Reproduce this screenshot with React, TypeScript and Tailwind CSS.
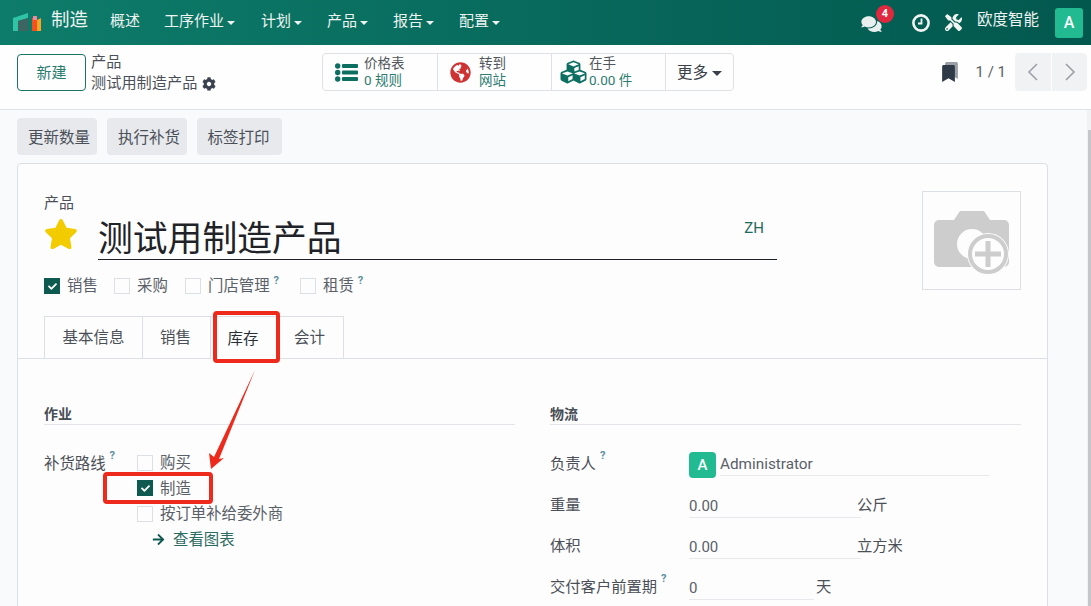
import React from "react";
import { FaCog, FaStar, FaComments, FaTools, FaBookmark, FaGlobeAmericas, FaCubes, FaArrowRight, FaCheck } from "react-icons/fa";

const font = { fontFamily: 'Roboto, "Noto Sans CJK SC", sans-serif' };

function Caret() {
  return <span className="w-0 h-0 ml-[3px] mt-[2px] border-x-[4.5px] border-t-[4.5px] border-x-transparent border-t-current" />;
}

function Check({ on = false }: { on?: boolean }) {
  return on ? (
    <span className="w-[16px] h-[16px] bg-[#0f5a50] flex items-center justify-center shrink-0">
      <FaCheck className="w-[9px] h-[9px] text-white" />
    </span>
  ) : (
    <span className="w-[16px] h-[16px] border border-[#dcdfe3] bg-[#fdfdfd] shrink-0" />
  );
}

function Help() {
  return <span className="text-[11px] leading-[12px] font-bold text-[#5a8fa0] ml-[4px]">?</span>;
}

function Opt({ label, on, help, w }: { label: string; on?: boolean; help?: boolean; w: string }) {
  return (
    <div className={"flex items-center gap-[7px] " + w}>
      <Check on={on} />
      <span className="pt-[2px] text-[15.4px] text-[#5a6068] flex items-start">{label}{help && <Help />}</span>
    </div>
  );
}

function Stat({ icon, top, bottom, w, pad = "pl-[12px]", col = "w-[29px]" }: { icon: React.ReactNode; top: string; bottom: string; w: string; pad?: string; col?: string }) {
  return (
    <div className={"flex items-center h-full border-r border-[#dee2e6] " + pad + " " + w}>
      <div className={"flex justify-start shrink-0 " + col}>{icon}</div>
      <div className="text-[13.5px] leading-[17px]">
        <div className="text-[#51565c]">{top}</div>
        <div className="text-[#2d7c70]">{bottom}</div>
      </div>
    </div>
  );
}

function Field({ label, help, value, unit, lineW }: { label: string; help?: boolean; value: string; unit: string; lineW: string }) {
  return (
    <div className="flex h-[41px] items-start">
      <div className="w-[139px] text-[15.3px] text-[#4b5058] flex items-start leading-[29px] shrink-0">{label}{help && <Help />}</div>
      <div className={"border-b border-[#e7e9ec] h-[27px] text-[15px] text-[#5a6068] leading-[30px] " + lineW}>{value}</div>
      <div className="text-[15.3px] text-[#4b5058] leading-[28px] ml-[-4px]">{unit}</div>
    </div>
  );
}

function Chevron({ left }: { left?: boolean }) {
  return (
    <svg width="12" height="20" viewBox="0 0 12 20" fill="none" stroke="#9aa0a6" strokeWidth="1.6">
      <polyline points={left ? "10,2 2,10 10,18" : "2,2 10,10 2,18"} />
    </svg>
  );
}

export default function App() {
  return (
    <div className="relative w-[1091px] h-[606px] overflow-hidden bg-[#f9fafb]" style={font}>
      {/* Navbar */}
      <div className="h-[45px] flex items-center pl-[13px] pr-[8px] bg-gradient-to-r from-[#0e7c6a] to-[#03584e] text-[#edf3f1]">
        <svg width="29" height="20" viewBox="0 0 29 20" className="shrink-0">
          <polygon points="0,5 15,0 15,5 5,8 5,18 0,18" fill="#2fc4a6" />
          <polygon points="5,8 15,5 15,18 5,18" fill="#3d6663" />
          <polygon points="19,5 24,5 24,18 19,18" fill="#f4511e" />
          <polygon points="24,7 28,5 28,18 24,18" fill="#f5a623" />
          <rect x="20" y="3" width="4" height="4" fill="#e88aa0" />
        </svg>
        <span className="text-[18.5px] ml-[9px] w-[59px] shrink-0 pb-[4px]">制造</span>
        <div className="flex items-center gap-[25px] text-[15px] pb-[2px]">
          <span className="mr-[-1px]">概述</span>
          <span className="flex items-center mr-[1px]">工序作业<Caret /></span>
          {["计划", "产品", "报告", "配置"].map((t) => (
            <span key={t} className="flex items-center">{t}<Caret /></span>
          ))}
        </div>
        <div className="ml-auto flex items-center">
          <div className="relative mr-[30px]">
            <FaComments className="w-[21px] h-[18px] text-[#e9efee] mt-[3px]" />
            <span className="absolute left-[15px] top-[-7px] w-[18px] h-[18px] rounded-full bg-[#e0293f] text-white text-[11px] font-bold flex items-center justify-center">4</span>
          </div>
          <svg width="18" height="18" viewBox="0 0 18 18" fill="none" stroke="#f2f5f4" className="mr-[15px]">
            <circle cx="9" cy="9" r="7.6" strokeWidth="2.6" />
            <path d="M9.5 4.5 V9.5 H6" strokeWidth="1.8" />
          </svg>
          <FaTools className="w-[17px] h-[17px] mr-[15px] text-[#f2f5f4]" />
          <span className="text-[15.5px] mr-[16px] pb-[4px]">欧度智能</span>
          <span className="w-[28px] h-[30px] rounded-[3px] bg-[#22bb91] text-white text-[16px] font-medium flex items-center justify-center">A</span>
        </div>
      </div>

      {/* Control panel */}
      <div className="h-[65px] bg-[#fefefe] border-b border-[#dee2e6] flex items-start pt-[8px] pl-[17px] pr-[4px]">
        <div className="w-[305px] flex items-start shrink-0">
          <button className="w-[69px] h-[37px] mt-[1px] pt-[2px] border border-[#1a7367] rounded-[4px] text-[15px] text-[#2a7c6f]">新建</button>
          <div className="ml-[5px] text-[15.2px] leading-[21px] text-[#4b5058] mt-[-1px]">
            <div>产品</div>
            <div className="flex items-center gap-[5px]">测试用制造产品 <FaCog className="w-[14px] h-[14px] text-[#3c4350]" /></div>
          </div>
        </div>
        <div className="w-[412px] h-[38px] border border-[#dee2e6] rounded-[4px] flex items-center shrink-0">
          <Stat
            w="w-[115px]"
            icon={
              <svg width="23" height="19" viewBox="0 0 23 19" fill="#0d6f61">
                <circle cx="2.7" cy="3" r="2.7" />
                <circle cx="2.7" cy="9.5" r="2.7" />
                <circle cx="2.7" cy="16" r="2.7" />
                <rect x="7" y="1" width="16" height="4" rx="1" />
                <rect x="7" y="7.5" width="16" height="4" rx="1" />
                <rect x="7" y="14" width="16" height="4" rx="1" />
              </svg>
            }
            top="价格表"
            bottom="0 规则"
          />
          <Stat w="w-[114px]" icon={<FaGlobeAmericas className="w-[21px] h-[21px] text-[#cf3232]" />} top="转到" bottom="网站" />
          <Stat w="w-[114px]" pad="pl-[7px]" col="w-[30px]" icon={<FaCubes className="w-[29px] h-[26px] text-[#0d6f61]" />} top="在手" bottom="0.00 件" />
          <div className="flex items-center pl-[11px] text-[15.5px] text-[#3b4048]"><span className="pt-[3px]">更多</span><span className="w-0 h-0 ml-[4px] mt-[2px] border-x-[5px] border-t-[5px] border-x-transparent border-t-[#3b4048]" /></div>
        </div>
        <div className="ml-auto flex items-center h-[38px]">
          <div className="relative w-[16px] h-[20px] mr-[18px]">
            <FaBookmark className="absolute left-[3px] top-0 w-[13px] h-[17px] text-[#9a9ea5]" />
            <FaBookmark className="absolute left-0 top-[3px] w-[13px] h-[17px] text-[#2f3a48]" />
          </div>
          <span className="text-[15px] text-[#5a6068] mr-[9px] pt-[1px]">1 / 1</span>
          <div className="w-[36px] h-[38px] bg-[#f1f2f3] rounded-l-[4px] flex items-center justify-center mr-[1px]"><Chevron left /></div>
          <div className="w-[35px] h-[38px] bg-[#f1f2f3] rounded-r-[4px] flex items-center justify-center"><Chevron /></div>
        </div>
      </div>

      {/* Content */}
      <div className="px-[17px] pt-[8px]">
        <div className="flex gap-[10px]">
          <button className="w-[80px] h-[37px] pt-[5px] pl-[4px] rounded-[4px] bg-[#e7e9ed] text-[15.5px] text-[#4b5058]">更新数量</button>
          <button className="w-[80px] h-[37px] pt-[5px] pl-[4px] rounded-[4px] bg-[#e7e9ed] text-[15.5px] text-[#4b5058]">执行补货</button>
          <button className="w-[85px] h-[37px] pt-[5px] pr-[2px] rounded-[4px] bg-[#e7e9ed] text-[15.5px] text-[#4b5058]">标签打印</button>
        </div>

        <div className="mt-[8px] w-[1031px] h-[500px] bg-[#fdfdfd] border border-[#dcdfe3] rounded-t-[4px]">
          <div className="px-[26px] pt-[27px] flex justify-between">
            <div className="w-[733px]">
              <div className="text-[15px] leading-[24px] h-[24px] text-[#4b5058]">产品</div>
              <div className="flex items-start mt-[1px]">
                <FaStar className="w-[34px] h-[32px] text-[#f3cc00] mt-[2px] shrink-0" />
                <div className="ml-[20px] w-[679px] h-[44px] border-b border-[#1f2328] flex justify-between items-start">
                  <span className="text-[34.8px] leading-[47px] text-[#1f2328]">测试用制造产品</span>
                  <span className="text-[15px] text-[#1f6a60] mr-[13px] mt-[1px]">ZH</span>
                </div>
              </div>
              <div className="flex items-center mt-[16px] h-[20px]">
                <Opt w="w-[70px]" label="销售" on />
                <Opt w="w-[71px]" label="采购" />
                <Opt w="w-[115px]" label="门店管理" help />
                <Opt w="w-[80px]" label="租赁" help />
              </div>
            </div>
            <div className="w-[99px] h-[99px] border border-[#dcdfe3] flex items-center justify-center">
              <svg width="76" height="70" viewBox="0 0 76 70">
                <path d="M5 14 H20 L26 5 H50 L56 14 H70 A5 5 0 0 1 75 19 V56 A5 5 0 0 1 70 61 H5 A5 5 0 0 1 0 56 V19 A5 5 0 0 1 5 14 Z" fill="#cdcdcd" />
                <circle cx="38" cy="38" r="15" fill="#fdfdfd" />
                <circle cx="54" cy="48" r="21" fill="#fdfdfd" />
                <circle cx="54" cy="48" r="18" fill="none" stroke="#cdcdcd" strokeWidth="4" />
                <rect x="41" y="45.5" width="26" height="5" fill="#cdcdcd" />
                <rect x="51.5" y="35" width="5" height="26" fill="#cdcdcd" />
              </svg>
            </div>
          </div>

          {/* Tabs */}
          <div className="mt-[20px] border-b border-[#dcdfe3] h-[43px] pl-[26px] flex text-[15.5px] text-[#4b5058]">
            <div className="w-[99px] h-[43px] pt-[3px] border border-[#dcdfe3] flex items-center justify-center">基本信息</div>
            <div className="w-[68px] h-[43px] pt-[3px] pr-[2px] border-y border-r border-[#dcdfe3] flex items-center justify-center">销售</div>
            <div className="w-[68px] h-[43px] pt-[3px] pr-[3px] border-t border-r border-[#dcdfe3] bg-[#fdfdfd] flex items-center justify-center text-[#2a2f35]">库存</div>
            <div className="w-[65px] h-[43px] pt-[3px] pr-[3px] border-y border-r border-[#dcdfe3] flex items-center justify-center">会计</div>
          </div>

          {/* Sheet */}
          <div className="pl-[26px] pt-[45px] flex gap-[35px]">
            <div className="w-[471px]">
              <div className="h-[21px] border-b border-[#e3e5e8] text-[14px] font-bold text-[#484d55] leading-[20px]">作业</div>
              <div className="flex mt-[25px]">
                <div className="w-[93px] text-[15.4px] text-[#4b5058] flex items-start leading-[29px]">补货路线<Help /></div>
                <div className="flex flex-col text-[15.4px] text-[#5a6068]">
                  <div className="h-[25px] flex items-center gap-[7px]"><Check /><span className="pt-[3px]">购买</span></div>
                  <div className="h-[26px] flex items-center gap-[7px]"><Check on /><span className="pt-[3px]">制造</span></div>
                  <div className="h-[25px] flex items-center gap-[7px]"><Check /><span className="pt-[2px]">按订单补给委外商</span></div>
                  <div className="h-[27px] flex items-center pl-[15px] text-[#2d6b62]"><FaArrowRight className="w-[13px] h-[13px] mr-[8px] text-[#0f5a50]" /><span className="pt-[2px]">查看图表</span></div>
                </div>
              </div>
            </div>
            <div className="w-[471px]">
              <div className="h-[21px] border-b border-[#e3e5e8] text-[14px] font-bold text-[#484d55] leading-[20px]">物流</div>
              <div className="mt-[25px]">
                <div className="flex h-[41px] items-start">
                  <div className="w-[139px] text-[15.3px] text-[#4b5058] flex items-start leading-[29px] shrink-0">负责人<Help /></div>
                  <span className="w-[27px] h-[26px] mt-[2px] rounded-[4px] bg-[#22bb91] text-white text-[15px] font-medium flex items-center justify-center shrink-0">A</span>
                  <div className="ml-[4px] w-[270px] h-[26px] border-b border-[#e7e9ec] text-[15.3px] text-[#5a6068] leading-[29px]">Administrator</div>
                </div>
                <Field label="重量" value="0.00" unit="公斤" lineW="w-[172px]" />
                <Field label="体积" value="0.00" unit="立方米" lineW="w-[172px]" />
                <Field label="交付客户前置期" help value="0" unit="天" lineW="w-[125px] mr-[6px]" />
              </div>
            </div>
          </div>
        </div>
      </div>

      {/* Scrollbar */}
      <div className="absolute right-0 top-[110px] bottom-0 w-[4px] bg-[#f1f2f3]">
        <div className="absolute left-[1px] right-0 top-[20px] bottom-0 bg-[#c4c6c9]" />
      </div>

      {/* Annotations */}
      <div className="absolute left-[213px] top-[311px] w-[67px] h-[52px] border-[4px] border-[#ee2a1c] rounded-[4px]" />
      <div className="absolute left-[103px] top-[472px] w-[110px] h-[32px] border-[4px] border-[#ee2a1c] rounded-[4px]" />
      <svg className="absolute left-0 top-0 pointer-events-none" width="1091" height="606">
        <polygon points="255,370 219,459 224,458 211,469 209,453 214,457" fill="#ee2a1c" />
      </svg>
    </div>
  );
}
